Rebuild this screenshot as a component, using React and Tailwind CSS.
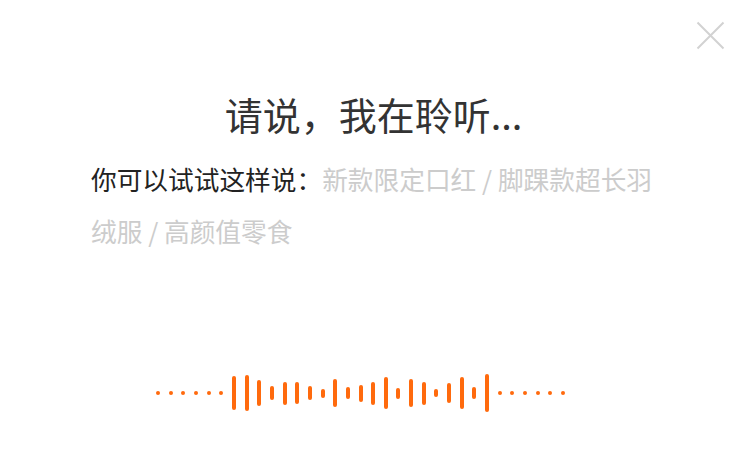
import React from 'react';

// bar heights of the voice wave, left to right
const BARS = [34, 36, 26, 14, 23, 22, 14, 9, 28, 12, 17, 23, 32, 11, 28, 23, 8, 20, 32, 12, 38];

function Wave() {
  const dots = Array.from({ length: 6 });
  return (
    <div className="flex items-center h-[48px] pl-[156px] gap-[8.66px]">
      {dots.map((_, i) => (
        <span key={'l' + i} className="w-[4px] h-[4px] rounded-full bg-[#ff6a0d]" />
      ))}
      {BARS.map((h, i) => (
        <span key={'b' + i} className="w-[4px] rounded-full bg-[#ff6a0d]" style={{ height: h }} />
      ))}
      {dots.map((_, i) => (
        <span key={'r' + i} className="w-[4px] h-[4px] rounded-full bg-[#ff6a0d]" />
      ))}
    </div>
  );
}

export default function App() {
  return (
    <div
      className="relative w-[747px] h-[470px] bg-white overflow-hidden"
      style={{ fontFamily: '"Noto Sans CJK SC", "Noto Sans", sans-serif' }}
    >
      {/* Close */}
      <button className="absolute top-[21px] right-[22px] w-[29px] h-[29px] flex items-center justify-center">
        <svg width="29" height="29" viewBox="0 0 29 29" fill="none">
          <path d="M1.5 1.5 L27.5 27.5 M27.5 1.5 L1.5 27.5" stroke="#d2d2d2" strokeWidth="2" />
        </svg>
      </button>

      <div className="pt-[91px]">
        <h1 className="text-center text-[38px] leading-[46px] text-[#333333] font-normal">
          请说，我在聆听...
        </h1>

        <p className="mt-[16px] pl-[91px] pr-[78px] text-[25.7px] leading-[52px] text-[#222222]">
          你可以试试这样说：
          <span className="text-[#cccccc]">新款限定口红 / 脚踝款超长羽绒服 / 高颜值零食</span>
        </p>

        <div className="mt-[112px]">
          <Wave />
        </div>
      </div>
    </div>
  );
}
